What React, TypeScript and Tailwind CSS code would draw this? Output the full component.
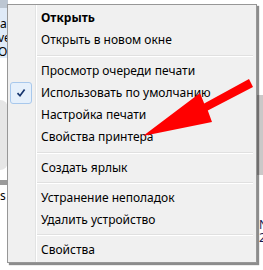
import React from "react";

type Item =
  | { kind: "item"; label: string; bold?: boolean; checked?: boolean }
  | { kind: "sep"; h: string };

const items: Item[] = [
  { kind: "item", label: "Открыть", bold: true },
  { kind: "item", label: "Открыть в новом окне" },
  { kind: "sep", h: "h-[9px]" },
  { kind: "item", label: "Просмотр очереди печати" },
  { kind: "item", label: "Использовать по умолчанию", checked: true },
  { kind: "item", label: "Настройка печати" },
  { kind: "item", label: "Свойства принтера" },
  { kind: "sep", h: "h-[9px]" },
  { kind: "item", label: "Создать ярлык" },
  { kind: "sep", h: "h-[8px]" },
  { kind: "item", label: "Устранение неполадок" },
  { kind: "item", label: "Удалить устройство" },
  { kind: "sep", h: "h-[8px]" },
  { kind: "item", label: "Свойства" },
];

function Check() {
  return (
    <div className="w-[22px] h-[22px] ml-[2px] rounded-[3px] border border-[#a8c8ec] bg-[#e6f0fb] flex items-center justify-center">
      <svg width="10" height="10" viewBox="0 0 10 10">
        <path d="M1.5 5.2 L4 7.8 L8.6 1.6" fill="none" stroke="#16356e" strokeWidth="1.7" />
      </svg>
    </div>
  );
}

export default function App() {
  return (
    <div
      className="relative w-[263px] h-[270px] overflow-hidden bg-white"
      style={{ fontFamily: '"Noto Sans", "Open Sans", sans-serif' }}
    >
      {/* underlying window fragments (left strip) */}
      <div className="absolute left-0 top-0 w-[8px] flex flex-col text-[12px] leading-[14px] text-black overflow-hidden">
        <div className="h-[8px] w-[22px] bg-[#bcc6d2]" />
        <div className="h-[50px] bg-[#dfeaf7] pt-[9px] flex flex-col">
          <span>a</span>
          <span className="-ml-[2px]">ve</span>
          <span className="-ml-[2px]">O</span>
        </div>
        <div className="h-[42px]" />
        <div className="h-[70px] rounded-r-full bg-[#e6e6e6]" />
        <div className="h-[10px]" />
        <div className="h-[5px] bg-[#9a9a9a]" />
        <span className="pt-[4px]">s</span>
      </div>
      {/* right strip */}
      <div className="absolute left-[257px] top-[95px] w-[6px] flex flex-col text-[12px] leading-[13px] text-[#1a1a50]">
        <div className="h-[80px] bg-[#cbc8c8]" />
        <div className="h-[43px]" />
        <span className="pl-[2px]">N</span>
        <span className="pl-[2px]">2</span>
      </div>

      {/* context menu */}
      <div className="absolute left-[7px] top-[4px] w-[250px] border border-[#979797] bg-[#f0f0f0] pt-[2px] pb-[1px] shadow-[2px_2px_1px_rgba(0,0,0,0.45)]">
        <div className="absolute left-[27px] top-0 bottom-0 w-[2px] border-l border-[#e2e3e3] bg-white" />
        <div className="relative flex flex-col">
          {items.map((it, i) =>
            it.kind === "sep" ? (
              <div key={i} className={`${it.h} flex items-center pl-[29px] pr-[3px]`}>
                <div className="w-full h-[2px] border-t border-[#e0e0e0] bg-white" />
              </div>
            ) : (
              <div key={i} className="h-[22px] flex items-center">
                <div className="w-[28px] flex items-center">{it.checked ? <Check /> : null}</div>
                <span
                  className={`pl-[5px] text-[12px] leading-none text-black whitespace-nowrap ${it.bold ? "font-bold" : ""}`}
                >
                  {it.label}
                </span>
              </div>
            )
          )}
        </div>
      </div>

      {/* red arrow */}
      <svg className="absolute left-0 top-0" width="263" height="270" viewBox="0 0 263 270">
        <polygon
          points="249,79 253,87 207.8,110.6 212,122 143,136 200,93 204.2,103.4"
          fill="#ff0000"
        />
      </svg>
    </div>
  );
}
